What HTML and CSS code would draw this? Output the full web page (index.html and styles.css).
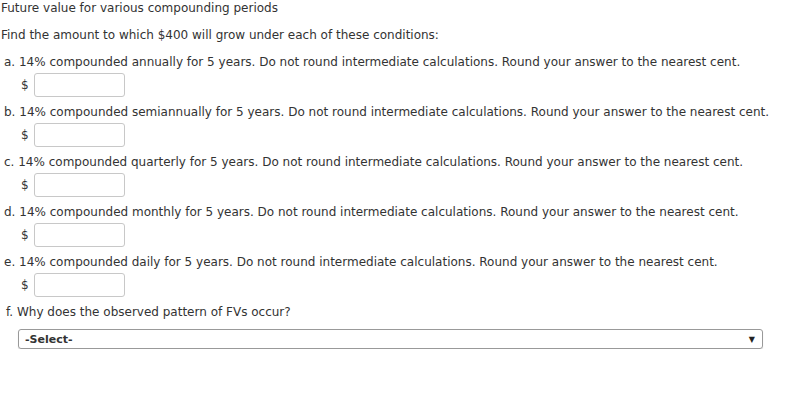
FILE: index.html
```html
<!DOCTYPE html>
<html lang="en">
<head>
    <meta charset="UTF-8">
    <title>Future value for various compounding periods</title>
    <link rel="stylesheet" href="styles.css">
</head>
<body>

    <!-- Judul soal -->
    <div class="title">Future value for various compounding periods</div>
    <p class="intro">Find the amount to which $400 will grow under each of these conditions:</p>

    <div class="question">
        <p>a. 14% compounded annually for 5 years. Do not round intermediate calculations. Round your answer to the nearest cent.</p>
        <div class="answer"><span class="dollar">$</span><input type="text" class="amount"></div>
    </div>

    <div class="question">
        <p>b. 14% compounded semiannually for 5 years. Do not round intermediate calculations. Round your answer to the nearest cent.</p>
        <div class="answer"><span class="dollar">$</span><input type="text" class="amount"></div>
    </div>

    <div class="question">
        <p>c. 14% compounded quarterly for 5 years. Do not round intermediate calculations. Round your answer to the nearest cent.</p>
        <div class="answer"><span class="dollar">$</span><input type="text" class="amount"></div>
    </div>

    <div class="question">
        <p>d. 14% compounded monthly for 5 years. Do not round intermediate calculations. Round your answer to the nearest cent.</p>
        <div class="answer"><span class="dollar">$</span><input type="text" class="amount"></div>
    </div>

    <div class="question">
        <p>e. 14% compounded daily for 5 years. Do not round intermediate calculations. Round your answer to the nearest cent.</p>
        <div class="answer"><span class="dollar">$</span><input type="text" class="amount"></div>
    </div>

    <div class="question last">
        <p>f. Why does the observed pattern of FVs occur?</p>
        <div class="select-box">
            <span>-Select-</span>
            <span class="arrow">&#9660;</span>
        </div>
    </div>

</body>
</html>
```

FILE: styles.css
```css
* {
    margin: 0;
    padding: 0;
    box-sizing: border-box;
}
body {
    font-family: 'DejaVu Sans', Verdana, sans-serif;
    font-size: 12px;
    color: #333;
    background: #fff;
    padding: 0 1px;
}
.title {
    line-height: 16px;
}
.intro {
    margin-top: 11px;
    margin-bottom: 11px;
    line-height: 16px;
}
.question {
    padding-left: 3px;
    margin-top: 7px;
}
.question p {
    line-height: 16px;
}
.answer {
    display: flex;
    align-items: center;
    margin-top: 3px;
    padding-left: 17px;
}
.dollar {
    width: 13px;
}
.amount {
    display: block;
    width: 91px;
    height: 24px;
    padding: 0;
    border: 1px solid #c8c8c8;
    border-radius: 3px;
    background: #fff;
    outline: none;
}
.last {
    padding-left: 5px;
}
.select-box {
    display: flex;
    justify-content: space-between;
    align-items: center;
    width: 745px;
    height: 20px;
    margin: 9px 0 0 12px;
    padding: 0 7px 0 6px;
    border: 1px solid #999;
    border-radius: 3px;
    box-shadow: 0 1px 1px rgba(0, 0, 0, 0.15);
    font-size: 11px;
    font-weight: bold;
}
.arrow {
    font-size: 8px;
    color: #222;
}
```
